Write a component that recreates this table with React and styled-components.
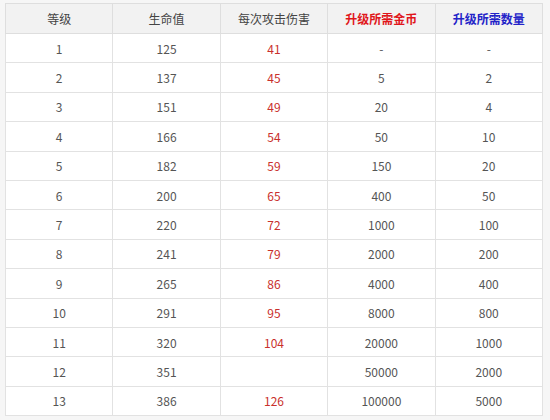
import React from "react";
import styled, { createGlobalStyle } from "styled-components";

const GlobalStyle = createGlobalStyle`
  html, body {
    margin: 0;
    padding: 0;
    background: #f6f6f6;
    width: 550px;
    height: 420px;
    overflow: hidden;
  }
  body {
    font-family: "Noto Sans CJK SC", "Liberation Sans", sans-serif;
  }
`;

const Page = styled.div`
  padding: 3px 8px 0 5px;
`;

const Table = styled.table`
  width: 538px;
  border-collapse: collapse;
  table-layout: fixed;
  background: #fff;
  font-size: 12px;
`;

const Th = styled.th`
  height: 29px;
  background: #f2f2f2;
  border: 1px solid #dedede;
  font-weight: ${props => (props.color ? "bold" : "normal")};
  color: ${props => props.color || "#444"};
  text-align: center;
  padding: 0;
`;

const Td = styled.td`
  height: 28.4px;
  border: 1px solid #e2e2e2;
  color: ${props => (props.red ? "#c9302c" : "#555")};
  text-align: center;
  padding: 0;
`;

const rows = [
  [1, 125, 41, "-", "-"],
  [2, 137, 45, 5, 2],
  [3, 151, 49, 20, 4],
  [4, 166, 54, 50, 10],
  [5, 182, 59, 150, 20],
  [6, 200, 65, 400, 50],
  [7, 220, 72, 1000, 100],
  [8, 241, 79, 2000, 200],
  [9, 265, 86, 4000, 400],
  [10, 291, 95, 8000, 800],
  [11, 320, 104, 20000, 1000],
  [12, 351, "", 50000, 2000],
  [13, 386, 126, 100000, 5000],
];

export default function App() {
  return (
    <Page>
      <GlobalStyle />
      <Table>
        <thead>
          <tr>
            <Th>等级</Th>
            <Th>生命值</Th>
            <Th>每次攻击伤害</Th>
            <Th color="#e0161b">升级所需金币</Th>
            <Th color="#2323c8">升级所需数量</Th>
          </tr>
        </thead>
        <tbody>
          {rows.map(r => (
            <tr key={r[0]}>
              <Td>{r[0]}</Td>
              <Td>{r[1]}</Td>
              <Td red>{r[2]}</Td>
              <Td>{r[3]}</Td>
              <Td>{r[4]}</Td>
            </tr>
          ))}
        </tbody>
      </Table>
    </Page>
  );
}
